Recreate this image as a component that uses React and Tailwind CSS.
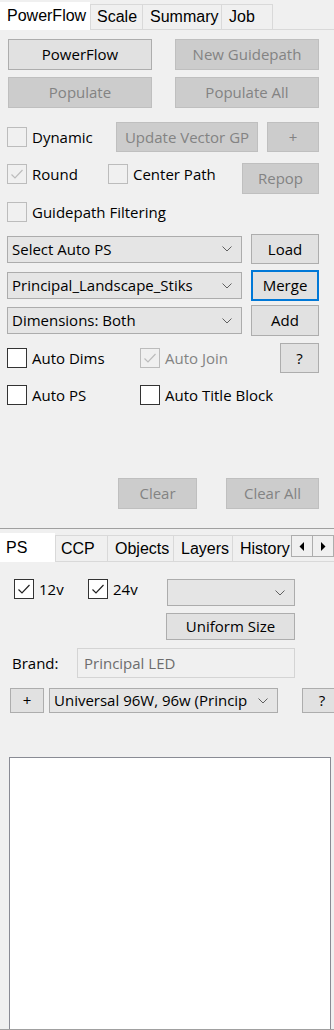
import React from 'react';

const body = "font-['Open_Sans',sans-serif] text-[15px]";

const Btn = ({ children, disabled, focused, className = '' }) => (
  <div
    className={`flex items-center justify-center shrink-0 ${
      disabled
        ? 'bg-[#cccccc] border border-[#bfbfbf] text-[#838383]'
        : focused
        ? 'bg-[#e1e1e1] border-2 border-[#0078d7] text-black'
        : 'bg-[#e1e1e1] border border-[#adadad] text-black'
    } ${className}`}
  >
    {children}
  </div>
);

const Check = ({ label, checked, disabled, dim, className = '' }) => (
  <div className={`flex items-center shrink-0 ${className}`}>
    <div
      className={`w-[20px] h-[20px] flex items-center justify-center ${
        disabled ? 'border border-[#bcbcbc] bg-[#f0f0f0]' : 'border border-[#333333] bg-white'
      }`}
    >
      {checked && (
        <svg width="16" height="16" viewBox="0 0 16 16">
          <path
            d="M2.5 8.5 L6 12 L13.5 4"
            fill="none"
            stroke={disabled ? '#bcbcbc' : '#222222'}
            strokeWidth="1.2"
          />
        </svg>
      )}
    </div>
    <span className={`ml-[5px] leading-none ${dim ? 'text-[#838383]' : 'text-black'}`}>{label}</span>
  </div>
);

const Chevron = () => (
  <svg width="10" height="6" viewBox="0 0 10 6" className="shrink-0">
    <path d="M0.5 0.5 L5 5 L9.5 0.5" fill="none" stroke="#606060" strokeWidth="1" />
  </svg>
);

const Select = ({ value, className = '' }) => (
  <div
    className={`flex items-center justify-between bg-[#e5e5e5] border border-[#acacac] pl-[4px] pr-[9px] overflow-hidden shrink-0 ${className}`}
  >
    <span className="whitespace-nowrap overflow-hidden text-black">{value}</span>
    <Chevron />
  </div>
);

const Tab = ({ label, selected, className = '' }) => (
  <div
    className={`flex items-center shrink-0 whitespace-nowrap overflow-hidden ${
      selected ? 'bg-white -mb-px' : 'bg-[#f0f0f0] border-t border-l border-[#d9d9d9]'
    } ${className}`}
  >
    {label}
  </div>
);

export default function App() {
  return (
    <div className={`w-[334px] h-[1030px] bg-[#f0f0f0] overflow-hidden flex flex-col ${body}`}>
      {/* main tabs */}
      <div className="flex items-end h-[30px] border-b border-[#d9d9d9] font-['Liberation_Sans',Arial,sans-serif] text-[16px] text-black">
        <Tab label="PowerFlow" selected className="w-[90px] h-[28px] pl-[7px]" />
        <Tab label="Scale" className="w-[52px] h-[25px] pl-[6px]" />
        <Tab label="Summary" className="w-[79px] h-[25px] pl-[7px]" />
        <Tab label="Job" className="w-[52px] h-[25px] pl-[7px] border-r" />
      </div>

      {/* powerflow page */}
      <div className="flex flex-col">
        <div className="mt-[9px] flex justify-between pl-[8px] pr-[15px]">
          <Btn className="w-[144px] h-[31px]">PowerFlow</Btn>
          <Btn disabled className="w-[144px] h-[31px]">New Guidepath</Btn>
        </div>
        <div className="mt-[7px] flex justify-between pl-[8px] pr-[15px]">
          <Btn disabled className="w-[144px] h-[31px]">Populate</Btn>
          <Btn disabled className="w-[144px] h-[31px]">Populate All</Btn>
        </div>

        <div className="mt-[14px] flex items-center h-[30px] pl-[7px]">
          <Check label="Dynamic" disabled className="w-[109px]" />
          <Btn disabled className="w-[142px] h-[30px]">Update Vector GP</Btn>
          <Btn disabled className="ml-[9px] w-[52px] h-[30px]">+</Btn>
        </div>

        <div className="mt-[11px] flex items-start h-[31px] pl-[7px] pr-[15px]">
          <Check label="Round" checked disabled className="w-[101px] mt-[1px]" />
          <Check label="Center Path" disabled className="mt-[1px]" />
          <Btn disabled className="ml-auto w-[77px] h-[31px]">Repop</Btn>
        </div>

        <div className="mt-[8px] flex h-[20px] pl-[7px]">
          <Check label="Guidepath Filtering" disabled />
        </div>

        <div className="mt-[12px] flex items-center h-[30px] pl-[7px]">
          <Select value="Select Auto PS" className="w-[235px] h-[27px]" />
          <Btn className="ml-[9px] w-[68px] h-[30px]">Load</Btn>
        </div>
        <div className="mt-[6px] flex items-center h-[31px] pl-[7px]">
          <Select value="Principal_Landscape_Stiks" className="w-[235px] h-[27px]" />
          <Btn focused className="ml-[9px] w-[68px] h-[31px]">Merge</Btn>
        </div>
        <div className="mt-[4px] flex items-center h-[31px] pl-[7px]">
          <Select value="Dimensions: Both" className="w-[235px] h-[27px]" />
          <Btn className="ml-[9px] w-[68px] h-[31px]">Add</Btn>
        </div>

        <div className="mt-[7px] flex items-center h-[30px] pl-[7px] pr-[15px]">
          <Check label="Auto Dims" className="w-[133px]" />
          <Check label="Auto Join" checked disabled dim />
          <Btn className="ml-auto w-[39px] h-[30px]">?</Btn>
        </div>
        <div className="mt-[12px] flex items-center h-[20px] pl-[7px]">
          <Check label="Auto PS" className="w-[133px]" />
          <Check label="Auto Title Block" />
        </div>

        <div className="mt-[73px] flex justify-end h-[31px] pr-[15px]">
          <Btn disabled className="w-[79px] h-[31px]">Clear</Btn>
          <Btn disabled className="ml-[29px] w-[93px] h-[31px]">Clear All</Btn>
        </div>
      </div>

      <div className="mt-[19px] h-px bg-[#a0a0a0]" />

      {/* lower tabs */}
      <div className="flex items-end h-[33px] border-b border-[#d9d9d9] font-['Liberation_Sans',Arial,sans-serif] text-[16px] text-black">
        <Tab label="PS" selected className="w-[55px] h-[29px] pl-[6px]" />
        <Tab label="CCP" className="w-[52px] h-[26px] pl-[5px]" />
        <Tab label="Objects" className="w-[66px] h-[26px] pl-[7px]" />
        <Tab label="Layers" className="w-[59px] h-[26px] pl-[7px]" />
        <Tab label="History" className="w-[59px] h-[26px] pl-[7px]" />
        <div className="self-start mt-[6px] flex h-[22px]">
          <div className="w-[22px] h-[22px] border border-[#adadad] bg-[#f0f0f0] flex items-center justify-center">
            <svg width="6" height="9" viewBox="0 0 6 9">
              <path d="M5 0 L0.5 4.5 L5 9 Z" fill="#000" />
            </svg>
          </div>
          <div className="w-[21px] h-[22px] border-y border-r border-[#adadad] bg-[#f0f0f0] flex items-center justify-center">
            <svg width="6" height="9" viewBox="0 0 6 9">
              <path d="M1 0 L5.5 4.5 L1 9 Z" fill="#000" />
            </svg>
          </div>
        </div>
      </div>

      {/* PS page */}
      <div className="flex flex-col flex-1">
        <div className="mt-[17px] flex items-start h-[27px] pl-[14px]">
          <Check label="12v" checked className="w-[74px]" />
          <Check label="24v" checked className="w-[79px]" />
          <Select value="" className="w-[128px] h-[27px]" />
        </div>
        <div className="mt-[7px] flex pl-[166px]">
          <Btn className="w-[129px] h-[27px]">Uniform Size</Btn>
        </div>
        <div className="mt-[8px] flex items-center h-[30px] pl-[12px]">
          <span className="w-[65px] text-black">Brand:</span>
          <div className="w-[218px] h-[30px] border border-[#d4d4d4] bg-[#f0f0f0] flex items-center pl-[6px] text-[#6d6d6d]">
            Principal LED
          </div>
        </div>
        <div className="mt-[10px] flex items-center h-[25px] pl-[10px]">
          <Btn className="w-[34px] h-[25px]">+</Btn>
          <Select value="Universal 96W, 96w (Princip" className="ml-[5px] w-[229px] h-[25px] pr-[6px]" />
          <Btn className="ml-[24px] w-[40px] h-[25px]">?</Btn>
        </div>
        <div className="mt-[44px] ml-[9px] w-[322px] flex-1 bg-white border-t border-x border-[#898b94]" />
      </div>
      <div className="h-px bg-[#a0a0a0]" />
    </div>
  );
}
